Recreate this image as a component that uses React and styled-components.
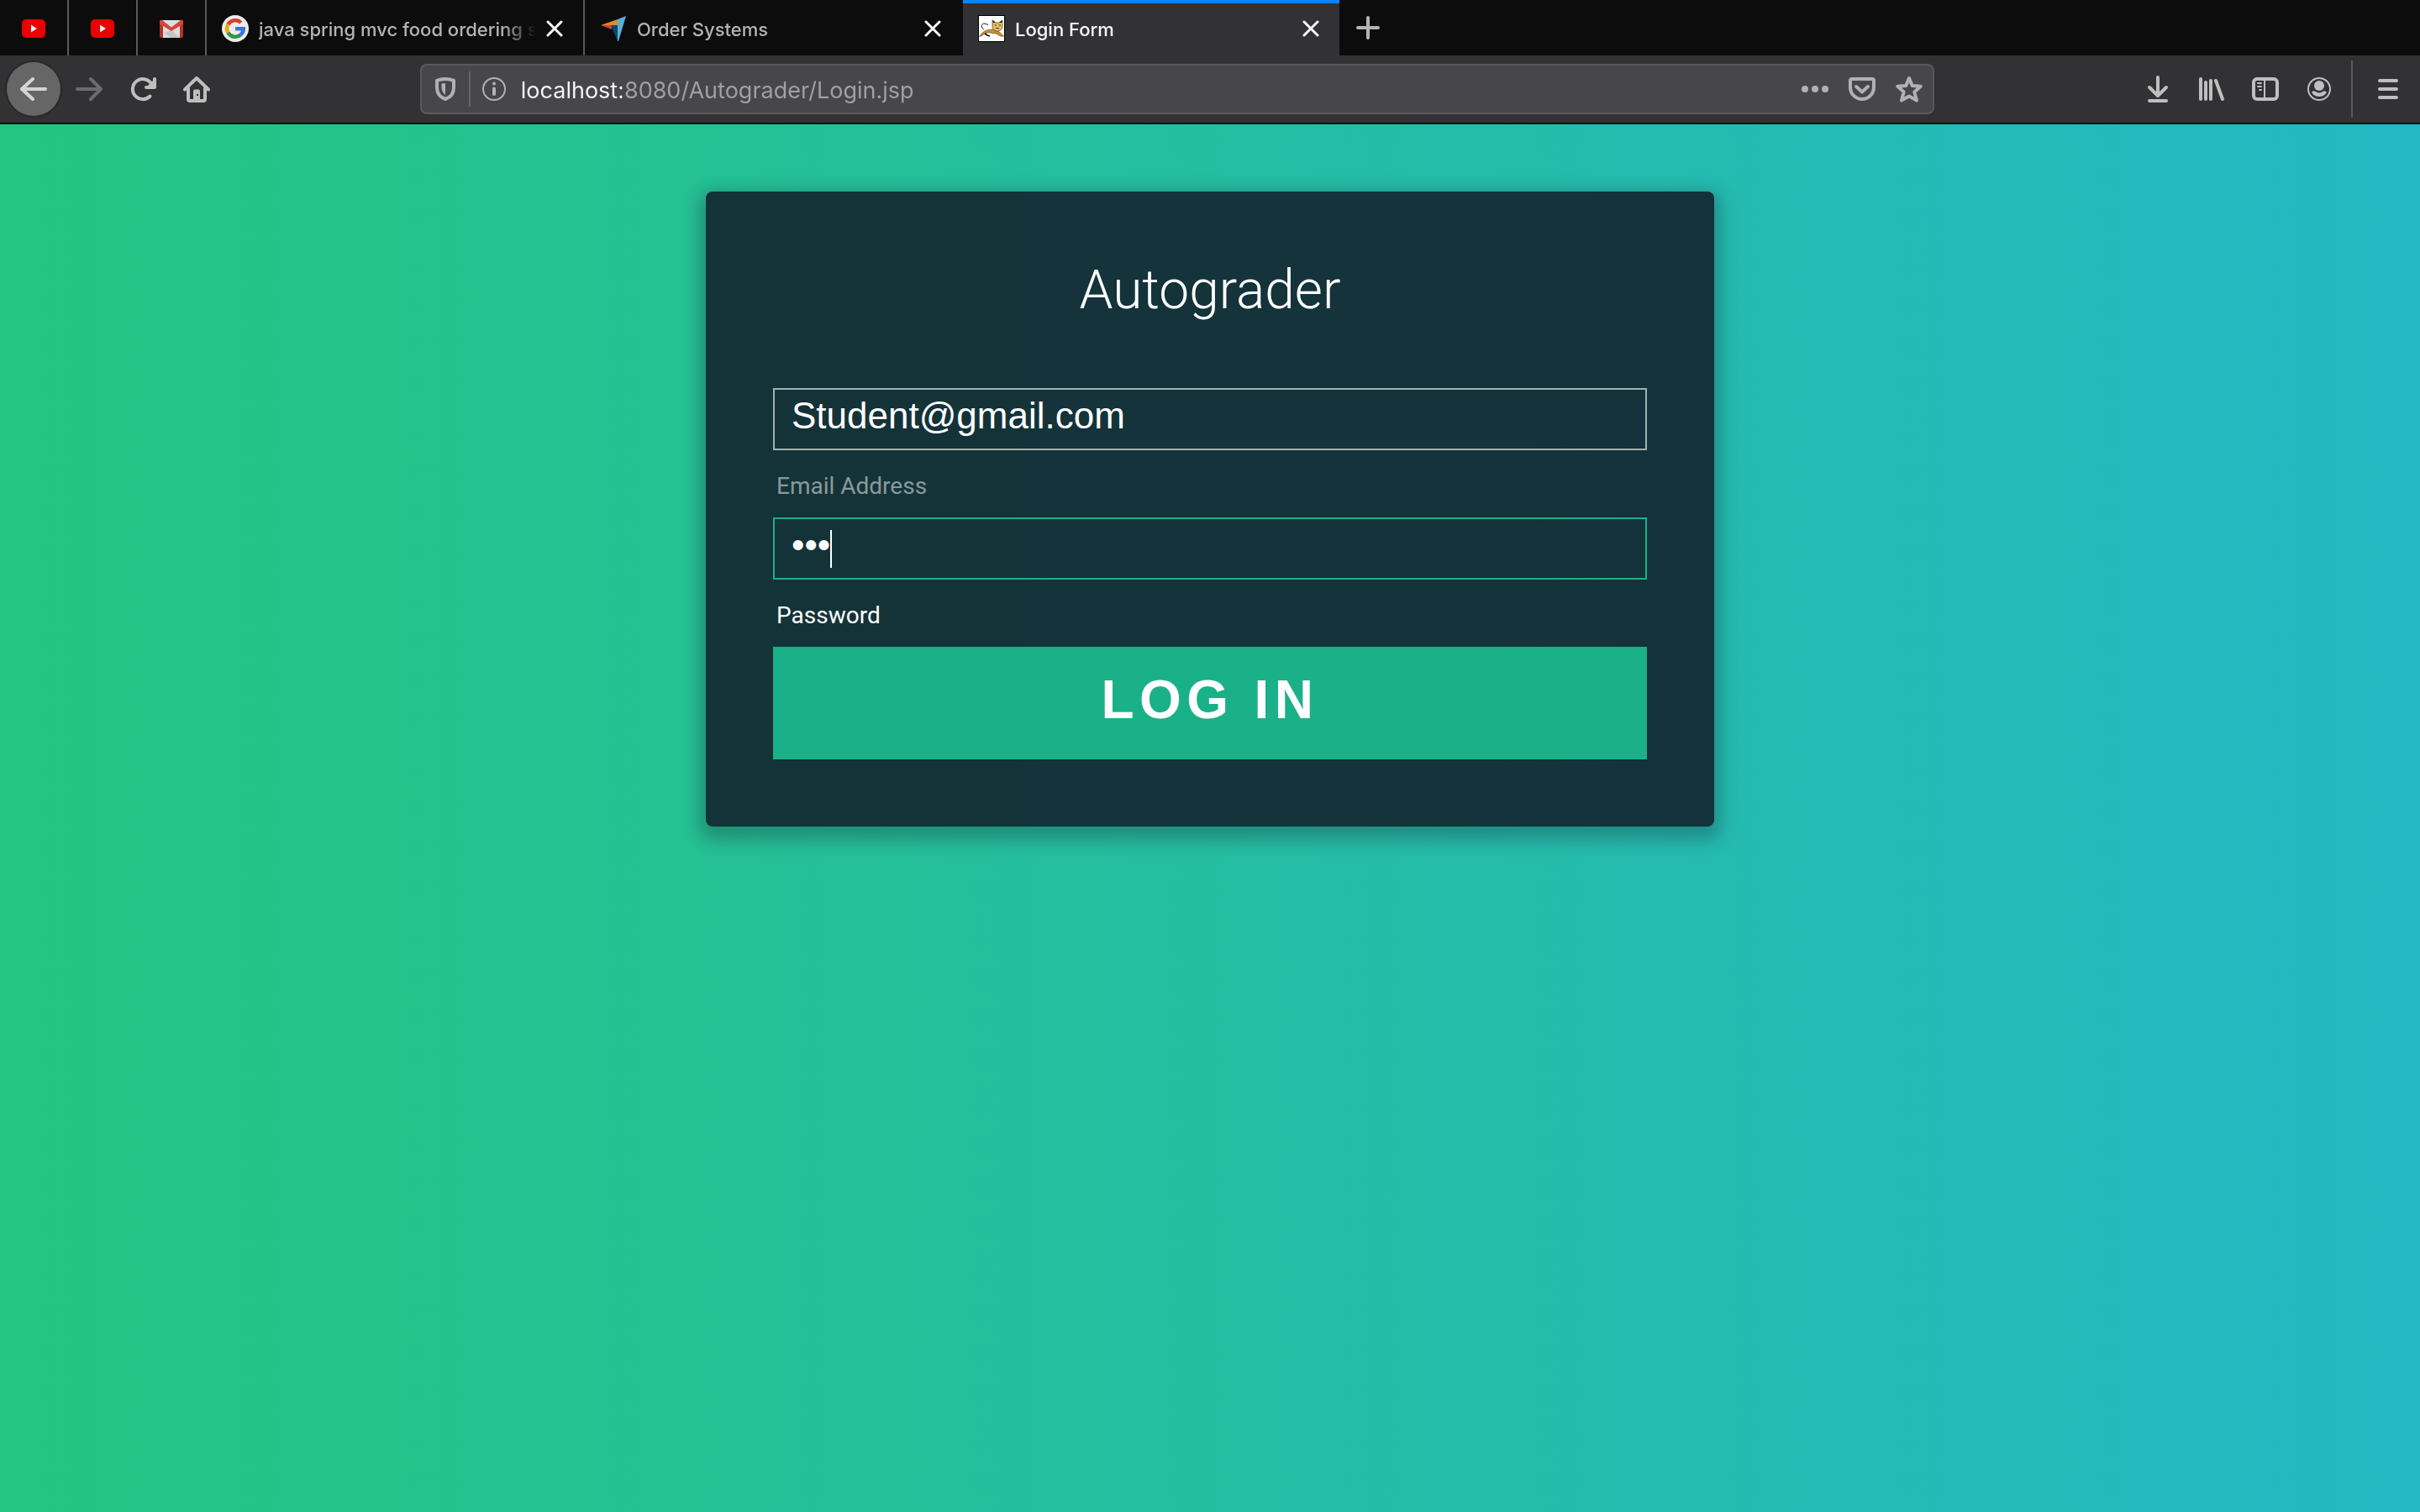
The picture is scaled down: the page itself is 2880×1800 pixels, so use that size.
import React from "react";
import styled, { createGlobalStyle, css } from "styled-components";

const GlobalStyle = createGlobalStyle`
  *, *::before, *::after { box-sizing: border-box; }
  body { margin: 0; background: #0c0c0d; }
`;

const chromeFont = css`
  font-family: Inter, "Noto Sans", sans-serif;
`;

const bareButton = css`
  display: flex;
  align-items: center;
  justify-content: center;
  padding: 0;
  border: 0;
  background: none;
  color: inherit;
  cursor: pointer;
`;

const Window = styled.div`
  display: flex;
  flex-direction: column;
  min-height: 100vh;
`;

/* Tab strip */

const TabStrip = styled.div`
  display: flex;
  height: 66px;
  background: #0c0c0d;
  color: #b4b4b5;
`;

const PinnedTab = styled.button`
  ${bareButton}
  width: 82px;
  padding-top: 2px;
  border-right: 2px solid #59595a;
`;

const Tab = styled.div`
  display: flex;
  align-items: center;
  gap: 8px;
  width: ${(p) => (p.$active ? 448 : 450)}px;
  padding: 2px 24px 0 18px;
  border-right: ${(p) => (p.$active ? "0" : "2px solid")};
  border-color: ${(p) => (p.$divided ? "#59595a" : "transparent")};
  background: ${(p) => (p.$active ? "#323234" : "transparent")};
  box-shadow: ${(p) => (p.$active ? "inset 0 4px #0a84ff" : "none")};
  color: ${(p) => (p.$active ? "#f9f9fa" : "inherit")};
`;

const TabSelect = styled.button`
  ${bareButton}
  ${chromeFont}
  flex: 1;
  min-width: 0;
  gap: 12px;
  justify-content: flex-start;
  font-size: 22px;
  font-weight: 500;
  line-height: 32px;
`;

const TabTitle = styled.span`
  flex: 1;
  padding-top: 2px;
  overflow: hidden;
  text-align: left;
  white-space: nowrap;
  mask-image: linear-gradient(to left, transparent 4px, #000 44px);
`;

const TabClose = styled.button`
  ${bareButton}
  width: 20px;
  height: 32px;
  color: #f9f9fa;
`;

const NewTab = styled.button`
  ${bareButton}
  width: 68px;
`;

/* Toolbar */

const Toolbar = styled.div`
  display: flex;
  align-items: center;
  height: 82px;
  padding: 0 6px 0 8px;
  border-bottom: 2px solid #0c0c0d;
  background: #323234;
  color: #bfbfc0;
`;

const ToolButton = styled.button`
  ${bareButton}
  width: 64px;
  height: 64px;
  color: ${(p) => (p.$dim ? "#6c6c6e" : "inherit")};
`;

const BackButton = styled(ToolButton)`
  margin-right: 2px;
  border-radius: 50%;
  background: #666667;
  box-shadow: 0 0 0 2px #29292a;
  color: #d4d4d5;
`;

const Spacer = styled.div`
  flex: 13 1 0;
`;

const AddressBar = styled.div`
  display: flex;
  align-items: center;
  flex: 100 1 0;
  height: 60px;
  border: 2px solid #5a5a5c;
  border-radius: 8px;
  background: #474749;
  color: #b1b1b3;
`;

const AddressButton = styled.button`
  ${bareButton}
  width: 56px;
  height: 56px;
`;

const AddressInput = styled.input`
  ${chromeFont}
  flex: 1;
  min-width: 0;
  height: 56px;
  padding: 2px 4px 0;
  border: 0;
  outline: 0;
  background: linear-gradient(to right, #f9f9fa 124px, #a1a1a3 124px);
  background-clip: text;
  color: transparent;
  font-size: 27px;
`;

const Divider = styled.div`
  width: 2px;
  height: ${(p) => (p.$tall ? 68 : 42)}px;
  margin: ${(p) => (p.$tall ? "0 10px 0 6px" : "0")};
  background: ${(p) => (p.$tall ? "#5a5a5c" : "#5f6670")};
`;

/* Login page */

const Page = styled.main`
  flex: 1;
  padding: 80px;
  background: linear-gradient(to right, #25c481, #25b7c4);
`;

const Card = styled.form`
  max-width: 1200px;
  margin: 0 auto;
  padding: 80px;
  border-radius: 8px;
  background: rgba(19, 35, 47, 0.9);
  box-shadow: 0 8px 20px 8px rgba(19, 35, 47, 0.3);
  font-family: Roboto, "Noto Sans", sans-serif;
`;

const Title = styled.h1`
  margin: 0 0 78px;
  color: #fff;
  font-size: 64px;
  font-weight: 300;
  line-height: 76px;
  text-align: center;
`;

const Field = styled.div`
  position: relative;
`;

const FieldInput = styled.input`
  display: block;
  width: 100%;
  height: 74px;
  padding: 6px 20px 14px;
  border: 2px solid ${(p) => (p.$focused ? "#1ab188" : "#a0b3b0")};
  border-radius: 0;
  outline: 0;
  background: transparent;
  color: #fff;
  caret-color: transparent;
  font-family: "Liberation Sans", Arial, sans-serif;
  font-size: 44px;
`;

const Caret = styled.span`
  position: absolute;
  top: 15px;
  left: 68px;
  width: 2px;
  height: 45px;
  background: #fff;
`;

const FieldLabel = styled.label`
  display: block;
  height: 80px;
  padding: 4px 4px 0;
  color: ${(p) => (p.$focused ? "#fff" : "rgba(255, 255, 255, 0.5)")};
  font-size: 28px;
  line-height: 78px;
`;

const SubmitButton = styled.button`
  display: block;
  width: 100%;
  height: 134px;
  padding: 0 0 8px;
  border: 0;
  background: #1ab188;
  color: #fff;
  font-family: "Liberation Sans", Arial, sans-serif;
  font-size: 64px;
  font-weight: 700;
  letter-spacing: 0.1em;
  text-transform: uppercase;
`;

/* Drawings */

const Glyph = ({ size = 32, width = 4, children }) => (
  <svg
    width={size}
    height={size}
    viewBox={`0 0 ${size} ${size}`}
    fill="none"
    stroke="currentColor"
    strokeWidth={width}
    strokeLinecap="round"
    strokeLinejoin="round"
    aria-hidden="true"
  >
    {children}
  </svg>
);

const Picture = ({ children }) => (
  <svg width="32" height="32" viewBox="0 0 32 32" aria-hidden="true">
    {children}
  </svg>
);

const YouTubeIcon = () => (
  <Picture>
    <rect x="2" y="5" width="28" height="22" rx="5" fill="#ea0000" />
    <path d="M13 11.5v9l7-4.500z" fill="#eee" />
  </Picture>
);

const GmailIcon = () => (
  <Picture>
    <path d="M4 6h24v21H4z" fill="#dedede" />
    <path d="M16 18l10 9H15l-7-6z" fill="#c6c6c6" />
    <path d="M2 8v17a2 2 0 0 0 2 2h2V10zM30 8v17a2 2 0 0 1-2 2h-2V10z" fill="#b83226" />
    <path d="M2 8a2 2 0 0 1 3-2l11 8.500L27 6a2 2 0 0 1 3 2v2.500L16 19 2 10.500z" fill="#d34639" />
  </Picture>
);

const GoogleIcon = () => (
  <Picture>
    <circle cx="16" cy="16" r="16" fill="#ececec" />
    <g fill="none" strokeWidth="4.500">
      <path d="M7.400 11.200A9.800 9.800 0 0 1 22.800 9" stroke="#d9402f" />
      <path d="M7.400 20.800a9.800 9.800 0 0 1 0-9.600" stroke="#e8ac0c" />
      <path d="M22.300 23.500a9.800 9.800 0 0 1-14.900-2.700" stroke="#2f9849" />
      <path d="M16 16.200h9.800a9.800 9.800 0 0 1-3.500 7.300" stroke="#3b76db" />
    </g>
  </Picture>
);

const OrderIcon = () => (
  <Picture>
    <path d="M1 12L21 5v7z" fill="#e08a28" />
    <path d="M21 5L31 1 22 31h-1z" fill="#5caed6" />
    <path d="M1 12h13v5z" fill="#cf4436" />
    <path d="M13 12h8v19z" fill="#0d4673" />
  </Picture>
);

const TomcatIcon = () => (
  <Picture>
    <rect x="0.5" y="0.5" width="31" height="31" fill="#fff" stroke="#000" />
    <path d="M7 17C3 15 3 10 8 10l4 1.500" fill="none" stroke="#222" strokeWidth="1" />
    <path
      d="M1.500 25.500C5 20 9 17 18 17l4 1c3 2 6 4 8.500 7-3 1-6-1-9-3-4 0-8-2-10-1-4 0-6 4-10 4.500z"
      fill="#c8922c"
      stroke="#4d3a16"
      strokeWidth="0.600"
    />
    <path d="M17 6l4 3h4l4-3v7c0 4-3 6-6 6s-6-2-6-6z" fill="#e8bf62" stroke="#222" strokeWidth="0.600" />
    <path d="M17 6l1 3 3 0zM29 6l-1 3-3 0z" fill="#111" />
    <path d="M19.500 12h2.500M24.500 12H27M21 15.500h4" stroke="#222" strokeWidth="0.800" />
    <path d="M8 22l3 2 3 1" fill="none" stroke="#111" strokeWidth="1.600" />
  </Picture>
);

const CloseIcon = () => (
  <Glyph size={20} width={3}>
    <path d="M2 2l16 16M18 2L2 18" />
  </Glyph>
);

const PlusIcon = () => (
  <Glyph>
    <path d="M16 4v24M4 16h24" />
  </Glyph>
);

const BackIcon = () => (
  <Glyph>
    <path d="M30 16H2M15 4L2 16l13 12" />
  </Glyph>
);

const ForwardIcon = () => (
  <Glyph>
    <path d="M2 16h28M18 4l12 12-12 12" />
  </Glyph>
);

const ReloadIcon = () => (
  <Glyph>
    <path d="M26.500 10.500A12 12 0 1 0 24.500 24.500" />
    <path d="M30 4v10H20z" fill="currentColor" stroke="none" />
    <path d="M30 4v10H20" />
  </Glyph>
);

const HomeIcon = () => (
  <Glyph>
    <path d="M2 16.500L16 3l14 13.500M6 15v13a2 2 0 0 0 2 2h16a2 2 0 0 0 2-2V15" />
    <path d="M12 30V18.500a2 2 0 0 1 2-2h4a2 2 0 0 1 2 2V30z" fill="currentColor" stroke="none" />
    <rect x="16" y="22" width="2" height="2" fill="#323234" stroke="none" />
  </Glyph>
);

const ShieldIcon = () => (
  <Glyph>
    <path d="M16 4c4 0 7 .6 10 1.800V14c0 7-4 12-10 14C10 26 6 21 6 14V5.800C9 4.600 12 4 16 4z" />
    <path d="M16 9v14c-3-2.500-4.500-5.500-4.500-9v-4.500z" fill="currentColor" stroke="none" />
  </Glyph>
);

const InfoIcon = () => (
  <Glyph>
    <circle cx="16" cy="16" r="13" strokeWidth="2" />
    <circle cx="16" cy="9.500" r="2" fill="currentColor" stroke="none" />
    <path d="M16 15.500v6.500" />
  </Glyph>
);

const MoreIcon = () => (
  <Glyph>
    <g fill="currentColor" stroke="none">
      <circle cx="4" cy="16" r="4" />
      <circle cx="16" cy="16" r="4" />
      <circle cx="28" cy="16" r="4" />
    </g>
  </Glyph>
);

const PocketIcon = () => (
  <Glyph>
    <path d="M4 4h24a2 2 0 0 1 2 2v8a14 14 0 0 1-28 0V6a2 2 0 0 1 2-2z" />
    <path d="M9 13l7 6.500 7-6.500" />
  </Glyph>
);

const StarIcon = () => (
  <Glyph>
    <path d="M16 3l3.700 9 10 .8-7.400 6.700L25 29.500 16 24.500 7 29.500l2.700-10-7.400-6.700 10-.8z" />
  </Glyph>
);

const DownloadIcon = () => (
  <Glyph>
    <path d="M16 2v22M6 14l10 10 10-10M6 30h20" />
  </Glyph>
);

const LibraryIcon = () => (
  <Glyph>
    <path d="M3 4v24M9 8v20M15 6v22M21 6l8 22" />
  </Glyph>
);

const SidebarIcon = () => (
  <Glyph>
    <rect x="2" y="4" width="28" height="24" rx="4" />
    <path d="M15 5v22" strokeWidth="2" strokeLinecap="butt" />
    <path d="M7 9h4M7 13h4M9 17h2" strokeWidth="2" />
  </Glyph>
);

const AccountIcon = () => (
  <Glyph>
    <circle cx="16" cy="16" r="13" strokeWidth="2" />
    <g fill="currentColor" stroke="none">
      <circle cx="16" cy="12" r="6" />
      <path d="M9 18.500h2c3 2.500 7 2.500 10 0h2c2 0 2 2 1 3-2 2.500-5 3.500-8 3.500s-6-1-8-3.500c-1-1-1-3 1-3z" />
    </g>
  </Glyph>
);

const MenuIcon = () => (
  <Glyph>
    <path d="M6 6h20M6 16h20M6 26h20" />
  </Glyph>
);

/* Data */

const pinnedTabs = [
  { label: "YouTube", Icon: YouTubeIcon },
  { label: "YouTube", Icon: YouTubeIcon },
  { label: "Gmail", Icon: GmailIcon },
];

const tabs = [
  { title: "java spring mvc food ordering sy", Icon: GoogleIcon, divided: true },
  { title: "Order Systems", Icon: OrderIcon },
  { title: "Login Form", Icon: TomcatIcon, active: true },
];

const tools = [
  { label: "Downloads", Icon: DownloadIcon },
  { label: "Library", Icon: LibraryIcon },
  { label: "Sidebars", Icon: SidebarIcon },
  { label: "Account", Icon: AccountIcon },
];

const pageActions = [
  { label: "Page actions", Icon: MoreIcon },
  { label: "Save to Pocket", Icon: PocketIcon },
  { label: "Bookmark this page", Icon: StarIcon },
];

export default function App() {
  return (
    <Window>
      <GlobalStyle />
      <TabStrip>
        {pinnedTabs.map(({ label, Icon }, i) => (
          <PinnedTab key={i} type="button" aria-label={label}>
            <Icon />
          </PinnedTab>
        ))}
        {tabs.map(({ title, Icon, active, divided }) => (
          <Tab key={title} $active={active} $divided={divided}>
            <TabSelect type="button">
              <Icon />
              <TabTitle>{title}</TabTitle>
            </TabSelect>
            <TabClose type="button" aria-label="Close tab">
              <CloseIcon />
            </TabClose>
          </Tab>
        ))}
        <NewTab type="button" aria-label="New tab">
          <PlusIcon />
        </NewTab>
      </TabStrip>

      <Toolbar>
        <BackButton type="button" aria-label="Back"><BackIcon /></BackButton>
        <ToolButton type="button" aria-label="Forward" $dim><ForwardIcon /></ToolButton>
        <ToolButton type="button" aria-label="Reload"><ReloadIcon /></ToolButton>
        <ToolButton type="button" aria-label="Home"><HomeIcon /></ToolButton>
        <Spacer />
        <AddressBar>
          <AddressButton type="button" aria-label="Tracking protection"><ShieldIcon /></AddressButton>
          <Divider />
          <AddressButton type="button" aria-label="Site information"><InfoIcon /></AddressButton>
          <AddressInput
            type="text"
            aria-label="Address"
            spellCheck={false}
            defaultValue="localhost:8080/Autograder/Login.jsp"
          />
          {pageActions.map(({ label, Icon }) => (
            <AddressButton key={label} type="button" aria-label={label}>
              <Icon />
            </AddressButton>
          ))}
        </AddressBar>
        <Spacer />
        {tools.map(({ label, Icon }) => (
          <ToolButton key={label} type="button" aria-label={label}>
            <Icon />
          </ToolButton>
        ))}
        <Divider $tall />
        <ToolButton type="button" aria-label="Menu"><MenuIcon /></ToolButton>
      </Toolbar>

      <Page>
        <Card onSubmit={(e) => e.preventDefault()}>
          <Title>Autograder</Title>
          <Field>
            <FieldInput id="email" type="email" defaultValue="Student@gmail.com" />
            <FieldLabel htmlFor="email">Email Address</FieldLabel>
          </Field>
          <Field>
            <FieldInput id="password" type="password" defaultValue="123" $focused />
            <Caret />
            <FieldLabel htmlFor="password" $focused>Password</FieldLabel>
          </Field>
          <SubmitButton type="submit">Log In</SubmitButton>
        </Card>
      </Page>
    </Window>
  );
}
